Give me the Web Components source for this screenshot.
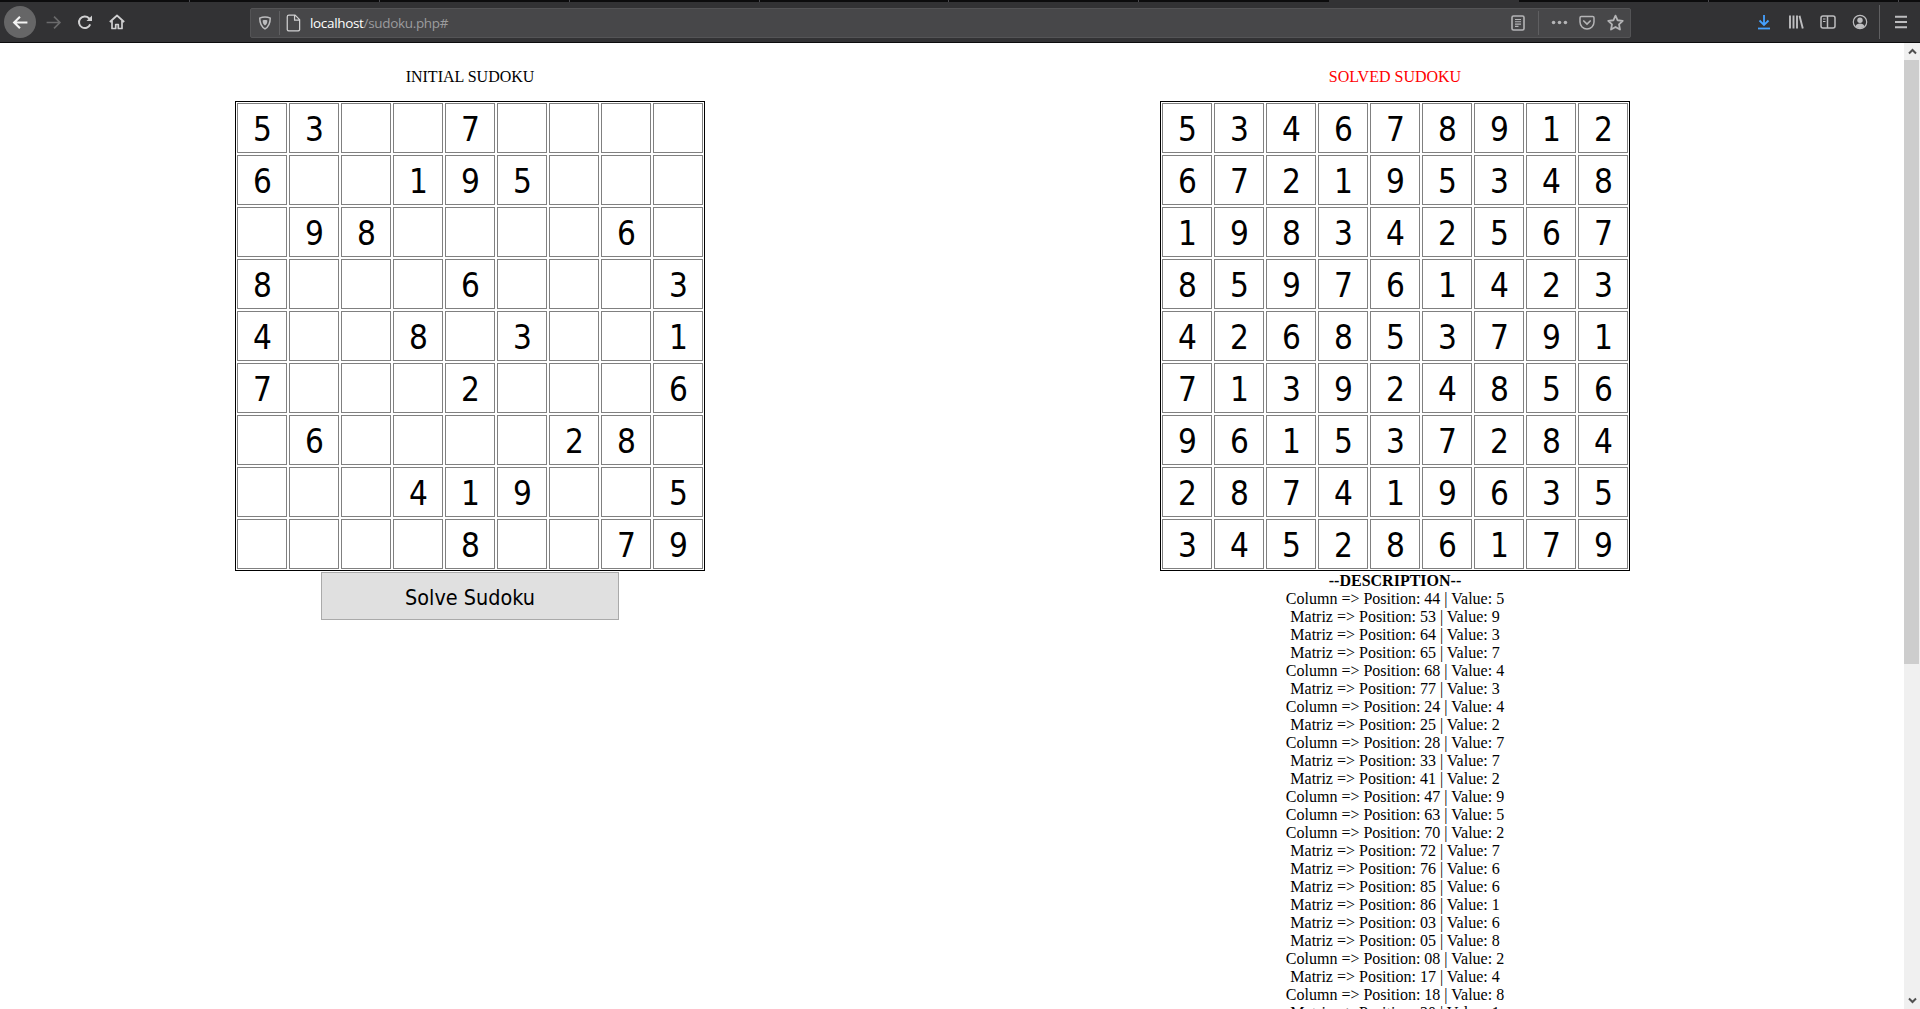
<!DOCTYPE html>
<html>
<head>
<meta charset="utf-8">
<title>Sudoku</title>
<style>
	html, body { margin: 0; height: 100%; overflow: hidden; background: #fff; }
</style>
</head>
<body>
<browser-window>
	<browser-toolbar slot="chrome"></browser-toolbar>
	<sudoku-page></sudoku-page>
</browser-window>

<script>
const ICONS = {
	back: '<path d="M14.5 8H2.5M7.5 2.5 2 8l5.5 5.5" fill="none" stroke="currentColor" stroke-width="2"/>',
	forward: '<path d="M1.5 8h12M8.5 2.5 14 8l-5.5 5.5" fill="none" stroke="currentColor" stroke-width="1.6"/>',
	reload: '<path d="M13.2 10.4A5.8 5.8 0 1 1 12 4.2L14 6" fill="none" stroke="currentColor" stroke-width="2"/><path d="M15 1.5V7H9.5z" fill="currentColor"/>',
	home: '<path d="M.8 8 8 1.5 15.2 8M3 6.5V14.5H6.7V10.5H9.3V14.5H13V6.5" fill="none" stroke="currentColor" stroke-width="1.7" stroke-linejoin="round"/>',
	shield: '<path d="M8 1.2c2.2 0 4.4.5 6 1.2 0 5.500-1.500 9.800-6 12.400C3.500 12.200 2 7.900 2 2.400c1.600-.7 3.800-1.200 6-1.200z" fill="none" stroke="currentColor" stroke-width="1.700"/><path d="M8 4.500c1 0 2 .2 2.700.5 0 2.500-.7 4.500-2.700 5.800C6 9.500 5.300 7.500 5.300 5c.7-.3 1.700-.5 2.700-.5z" fill="currentColor"/>',
	page: '<path d="M3.500 1h5.500L13 5v9a1.500 1.500 0 0 1-1.500 1h-8A1.500 1.500 0 0 1 2 14V2.500A1.500 1.500 0 0 1 3.500 1zM8.500 1v4.500H13" fill="none" stroke="currentColor" stroke-width="1.100" stroke-linejoin="round"/>',
	reader: '<rect x="2" y="1" width="12" height="14" rx="1.500" fill="none" stroke="currentColor" stroke-width="1.600"/><path d="M5 4.500h6M5 6.800h6M5 9.100h6M5 11.400h3.500" stroke="currentColor" stroke-width="1.100"/>',
	dots: '<circle cx="3" cy="8" r="1.500" fill="currentColor"/><circle cx="8" cy="8" r="1.500" fill="currentColor"/><circle cx="13" cy="8" r="1.500" fill="currentColor"/>',
	pocket: '<path d="M2.300 1.500h11.400c.7 0 1.300.6 1.300 1.300V7A7 7 0 0 1 1 7V2.800c0-.7.6-1.300 1.300-1.300z" fill="none" stroke="currentColor" stroke-width="1.500"/><path d="M4.800 6 8 9l3.200-3" fill="none" stroke="currentColor" stroke-width="1.700" stroke-linecap="round"/>',
	star: '<path d="M8 1.500l2 4.400 4.800.6-3.500 3.300.9 4.800L8 12.200l-4.200 2.400.9-4.800L1.200 6.500 6 5.900z" fill="none" stroke="currentColor" stroke-width="1.700" stroke-linejoin="round"/>',
	download: '<path d="M8 1v9.500M3.500 6.500 8 11l4.500-4.500" fill="none" stroke="currentColor" stroke-width="1.800"/><path d="M2 14.500h12" stroke="currentColor" stroke-width="1.800"/>',
	library: '<path d="M2 1.500v13M5.500 1.500v13M9 1.500v13M11.500 1.800l3.300 12.700" fill="none" stroke="currentColor" stroke-width="1.900"/>',
	sidebar: '<rect x="1" y="2" width="14" height="12" rx="2" fill="none" stroke="currentColor" stroke-width="1.500"/><path d="M7.500 2v12" stroke="currentColor" stroke-width="1.500"/><path d="M3 5h2.500M3 7.500h2.500" stroke="currentColor" stroke-width="1.100"/>',
	account: '<circle cx="8" cy="8" r="6.700" fill="none" stroke="currentColor" stroke-width="1.200"/><circle cx="8" cy="6.200" r="2.700" fill="currentColor"/><path d="M3.500 12.500c.6-2.200 2.300-3 4.500-3s3.900.8 4.500 3A6 6 0 0 1 8 14a6 6 0 0 1-4.500-1.500z" fill="currentColor"/>',
	menu: '<path d="M2 2.800h12M2 8h12M2 13.200h12" stroke="currentColor" stroke-width="1.900"/>'
};

class TbIcon extends HTMLElement {
	constructor() {
		super();
		this.attachShadow({ mode: 'open' });
	}

	connectedCallback() {
		const size = this.getAttribute('size') || 16;
		this.shadowRoot.innerHTML = `
			<style>
				:host { display: flex; align-items: center; justify-content: center; flex: none; color: #bdbdbf; }
				svg { display: block; }
			</style>
			<svg width="${size}" height="${size}" viewBox="0 0 16 16">${ICONS[this.getAttribute('name')]}</svg>
		`;
	}
}
customElements.define('tb-icon', TbIcon);

class BrowserToolbar extends HTMLElement {
	constructor() {
		super();
		this.attachShadow({ mode: 'open' });
		this.shadowRoot.innerHTML = `
			<style>
				:host { display: block; flex: none; background: #0c0c0d; }
				#tabs { display: grid; grid-template-columns: repeat(10, 189.900px) 1fr; height: 2px; }
				#tabs i { border-right: 1px solid #4a4a4f; }
				#tabs i.before { border-right: 0; }
				#tabs i.active { background: #323234; border-right: 0; }
				#bar {
					height: 40px;
					background: #323234;
					border-bottom: 1px solid #0c0c0d;
					display: flex;
					align-items: center;
					padding-left: 4px;
				}
				#back { width: 32px; height: 32px; border-radius: 50%; background: #666667; color: #f4f4f4; }
				#forward { width: 32px; margin-left: 1px; color: #6a6a6b; }
				#reload { width: 32px; color: #d0d0d1; }
				#home { width: 32px; color: #d0d0d1; }
				#url {
					box-sizing: border-box;
					width: 1381px;
					height: 30px;
					margin: 1px 0 0 117px;
					padding-right: 1px;
					background: #474749;
					border: 1px solid #545456;
					border-radius: 2px;
					display: flex;
					align-items: center;
					font: 13.500px "Open Sans", sans-serif;
				}
				#shield { width: 28px; color: #bdbdbf; }
				.sep { width: 1px; height: 24px; background: #5f5f61; flex: none; }
				#page { width: 28px; color: #d0d0d1; }
				#addr { flex: 1; padding-left: 2px; color: #fff; letter-spacing: -0.330px; white-space: nowrap; }
				#addr span { color: #9c9c9e; }
				#reader { width: 32px; color: #b4b4b6; }
				#url .end { margin: 0 6px 0 4px; }
				#dots, #pocket, #star { width: 28px; color: #b4b4b6; }
				#right { display: flex; align-items: center; margin-left: auto; height: 100%; padding-right: 3px; }
				#right tb-icon { width: 32px; }
				#dl { color: #45a1ff; }
				#right .sep { height: 34px; margin: 0 5px 0 3px; }
			</style>
			<div id="tabs"><i></i><i></i><i></i><i></i><i></i><i></i><i class="before"></i><i class="active"></i><i></i><i></i></div>
			<div id="bar">
				<tb-icon id="back" name="back" size="17"></tb-icon>
				<tb-icon id="forward" name="forward" size="17"></tb-icon>
				<tb-icon id="reload" name="reload" size="16"></tb-icon>
				<tb-icon id="home" name="home" size="16"></tb-icon>
				<div id="url">
					<tb-icon id="shield" name="shield" size="14"></tb-icon>
					<div class="sep"></div>
					<tb-icon id="page" name="page" size="18"></tb-icon>
					<div id="addr">localhost<span>/sudoku.php#</span></div>
					<tb-icon id="reader" name="reader" size="16"></tb-icon>
					<div class="sep end"></div>
					<tb-icon id="dots" name="dots" size="19"></tb-icon>
					<tb-icon id="pocket" name="pocket" size="16"></tb-icon>
					<tb-icon id="star" name="star" size="17"></tb-icon>
				</div>
				<div id="right">
					<tb-icon id="dl" name="download" size="16"></tb-icon>
					<tb-icon name="library" size="16"></tb-icon>
					<tb-icon name="sidebar" size="16"></tb-icon>
					<tb-icon name="account" size="16"></tb-icon>
					<div class="sep"></div>
					<tb-icon name="menu" size="16"></tb-icon>
				</div>
			</div>
		`;
	}
}
customElements.define('browser-toolbar', BrowserToolbar);

class ScrollRail extends HTMLElement {
	constructor() {
		super();
		this.attachShadow({ mode: 'open' });
		this.shadowRoot.innerHTML = `
			<style>
				:host { display: flex; flex-direction: column; flex: none; width: 16px; background: #f0f0f0; }
				.arrow { height: 17px; display: flex; align-items: center; justify-content: center; }
				#thumb { height: 604px; width: 15px; background: #cdcdcd; }
				#space { flex: 1; }
			</style>
			<div class="arrow"><svg width="9" height="7" viewBox="0 0 9 7"><path d="M1 5.500 4.500 2 8 5.500" fill="none" stroke="#505050" stroke-width="2"/></svg></div>
			<div id="thumb"></div>
			<div id="space"></div>
			<div class="arrow"><svg width="9" height="7" viewBox="0 0 9 7"><path d="M1 1.500 4.500 5 8 1.500" fill="none" stroke="#505050" stroke-width="2"/></svg></div>
		`;
	}
}
customElements.define('scroll-rail', ScrollRail);

class BrowserWindow extends HTMLElement {
	constructor() {
		super();
		this.attachShadow({ mode: 'open' });
		this.shadowRoot.innerHTML = `
			<style>
				:host { display: flex; flex-direction: column; height: 1009px; overflow: hidden; }
				#view { flex: 1; display: flex; min-height: 0; }
				#content { flex: 1; min-width: 0; overflow: hidden; }
			</style>
			<slot name="chrome"></slot>
			<div id="view">
				<div id="content"><slot></slot></div>
				<scroll-rail></scroll-rail>
			</div>
		`;
	}
}
customElements.define('browser-window', BrowserWindow);

class SudokuBoard extends HTMLElement {
	constructor() {
		super();
		this.attachShadow({ mode: 'open' });
	}

	connectedCallback() {
		const cells = (this.getAttribute('values') || '').split('').map(v => `<div>${v === '.' ? '' : v}</div>`);
		this.shadowRoot.innerHTML = `
			<style>
				:host {
					display: grid;
					grid-template-columns: repeat(9, 50px);
					grid-auto-rows: 50px;
					gap: 2px;
					width: max-content;
					padding: 1px;
					border: 1px solid #000;
				}
				div {
					box-sizing: border-box;
					padding: 2px 0 0 1px;
					border: 1px solid #808080;
					display: flex;
					align-items: center;
					justify-content: center;
					font: 33px "DejaVu Sans Condensed", "DejaVu Sans", sans-serif;
					color: #000;
				}
			</style>
			${cells.join('')}
		`;
	}
}
customElements.define('sudoku-board', SudokuBoard);

class SudokuPanel extends HTMLElement {
	constructor() {
		super();
		this.attachShadow({ mode: 'open' });
	}

	connectedCallback() {
		this.shadowRoot.innerHTML = `
			<style>
				:host { display: flex; flex-direction: column; align-items: center; text-align: center; }
				#title { margin-bottom: 15px; color: ${this.getAttribute('color') || '#000'}; }
			</style>
			<div id="title">${this.getAttribute('heading')}</div>
			<slot></slot>
		`;
	}
}
customElements.define('sudoku-panel', SudokuPanel);

class SolveButton extends HTMLElement {
	constructor() {
		super();
		this.attachShadow({ mode: 'open' });
		this.shadowRoot.innerHTML = `
			<style>
				:host {
					display: flex;
					align-items: center;
					justify-content: center;
					box-sizing: border-box;
					width: 298px;
					height: 48px;
					margin-top: 1px;
					padding-top: 2px;
					background: #e0e0e0;
					border: 1px solid #aaa;
					font: 21.400px "DejaVu Sans Condensed", "DejaVu Sans", sans-serif;
					color: #000;
				}
			</style>
			<slot></slot>
		`;
	}
}
customElements.define('solve-button', SolveButton);

class SolveLog extends HTMLElement {
	constructor() {
		super();
		this.attachShadow({ mode: 'open' });
	}

	connectedCallback() {
		const rows = this.getAttribute('steps').split(' ').map(step => {
			const [kind, pos, val] = step.split(':');
			return `<div>${kind === 'C' ? 'Column' : 'Matriz'} =&gt; Position: ${pos} | Value: ${val}</div>`;
		});
		this.shadowRoot.innerHTML = `
			<style>
				:host { display: block; margin-top: 1px; text-align: center; line-height: 18px; }
				b { display: block; }
			</style>
			<b>--DESCRIPTION--</b>
			${rows.join('')}
		`;
	}
}
customElements.define('solve-log', SolveLog);

class SudokuPage extends HTMLElement {
	constructor() {
		super();
		this.attachShadow({ mode: 'open' });
		this.shadowRoot.innerHTML = `
			<style>
				:host {
					display: grid;
					grid-template-columns: 924px 924px;
					column-gap: 1px;
					align-items: start;
					padding: 25px 8px 0;
					font: 16px/18px "Liberation Serif", "Times New Roman", serif;
					color: #000;
				}
			</style>
			<sudoku-panel heading="INITIAL SUDOKU">
				<sudoku-board values="53..7....6..195....98....6.8...6...34..8.3..17...2...6.6....28....419..5....8..79"></sudoku-board>
				<solve-button>Solve Sudoku</solve-button>
			</sudoku-panel>
			<sudoku-panel heading="SOLVED SUDOKU" color="#ff0000">
				<sudoku-board values="534678912672195348198342567859761423426853791713924856961537284287419635345286179"></sudoku-board>
				<solve-log steps="C:44:5 M:53:9 M:64:3 M:65:7 C:68:4 M:77:3 C:24:4 M:25:2 C:28:7 M:33:7 M:41:2 C:47:9 C:63:5 C:70:2 M:72:7 M:76:6 M:85:6 M:86:1 M:03:6 M:05:8 C:08:2 M:17:4 C:18:8 M:20:1"></solve-log>
			</sudoku-panel>
		`;
	}
}
customElements.define('sudoku-page', SudokuPage);
</script>
</body>
</html>
